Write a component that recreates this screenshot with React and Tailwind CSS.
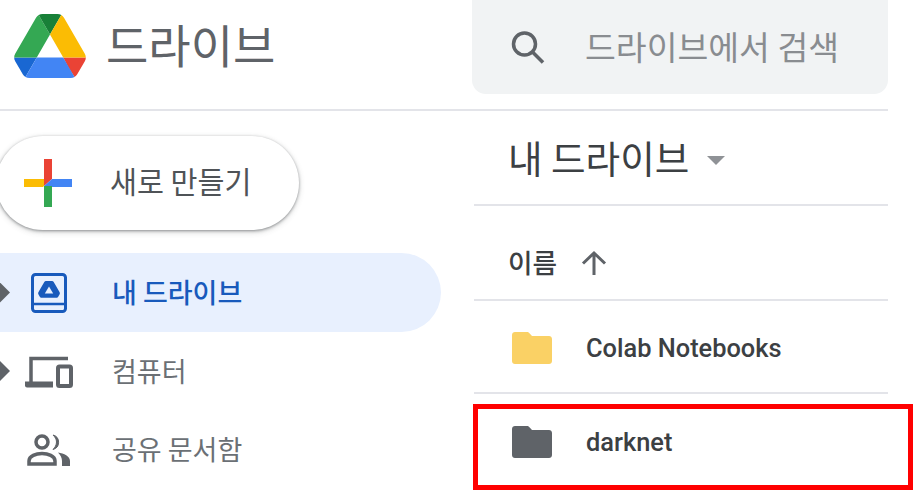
import React from "react";

// Google Drive logo.
function DriveLogo() {
    return (
        <svg viewBox="0 0 87.3 78" className="w-[72px] h-[64px] shrink-0">
            <path d="m6.6 66.85 3.85 6.65c.8 1.4 1.95 2.5 3.3 3.3l13.75-23.8h-27.5c0 1.55.4 3.1 1.2 4.5z" fill="#1967d2" />
            <path d="m43.65 25-13.75-23.8c-1.35.8-2.5 1.9-3.3 3.3l-25.4 44a9.06 9.06 0 0 0 -1.2 4.5h27.5z" fill="#34a853" />
            <path d="m73.55 76.8c1.35-.8 2.5-1.9 3.3-3.3l1.6-2.75 7.65-13.25c.8-1.4 1.2-2.95 1.2-4.5h-27.502l5.852 11.5z" fill="#ea4335" />
            <path d="m43.65 25 13.75-23.8c-1.35-.8-2.9-1.2-4.5-1.2h-18.5c-1.6 0-3.15.45-4.5 1.2z" fill="#188038" />
            <path d="m59.8 53h-32.3l-13.75 23.8c1.35.8 2.9 1.2 4.5 1.2h50.8c1.6 0 3.15-.45 4.5-1.2z" fill="#4285f4" />
            <path d="m73.4 26.5-12.7-22c-.8-1.4-1.95-2.5-3.3-3.3l-13.75 23.8 16.15 28h27.45c0-1.55-.4-3.1-1.2-4.5z" fill="#fbbc04" />
        </svg>
    );
}

// Four colour plus of the new button.
function ColorPlus() {
    return (
        <svg viewBox="0 0 48 48" className="w-[48px] h-[48px] shrink-0">
            <path d="M20 0h8v20l-8 7z" fill="#ea4335" />
            <path d="M48 20v8H28l-8-1 8-7z" fill="#4285f4" />
            <path d="M20 48V27h8v21z" fill="#34a853" />
            <path d="M0 20h20v7l-1 1H0z" fill="#fbbc04" />
        </svg>
    );
}

function MyDriveIcon() {
    return (
        <svg viewBox="0 0 36 40" className="w-[36px] h-[40px] ml-[7px]">
            <rect x="1.5" y="1.5" width="33" height="37" rx="3" fill="none" stroke="#185abc" strokeWidth="3" />
            <path d="M2 31h32" stroke="#185abc" strokeWidth="2.5" />
            <path d="M15 8h6c.8 0 1.300.3 1.700 1l5.800 10c.5.9.5 1.500 0 2.400l-1.300 2.300c-.4.8-1 1.100-1.900 1.100H10.700c-.9 0-1.500-.3-1.900-1.100l-1.300-2.300c-.5-.9-.5-1.500 0-2.400L13.300 9c.4-.7.9-1 1.700-1z" fill="#185abc" />
            <path d="M18 13.500l-4.200 7h8.400z" fill="#e8f0fe" />
        </svg>
    );
}

function ComputerIcon() {
    return (
        <svg viewBox="0 0 48 32" className="w-[48px] h-[32px] ml-[1px] mt-[2px]">
            <path d="M6 30V2.500h37" fill="none" stroke="#5f6368" strokeWidth="3.500" />
            <path d="M0 25.500h28V31.500H2q-2 0-2-2z" fill="#5f6368" />
            <rect x="33" y="10.500" width="13" height="19.500" rx="1.500" fill="none" stroke="#5f6368" strokeWidth="4" />
        </svg>
    );
}

function SharedIcon() {
    return (
        <svg viewBox="0 0 44 32" className="w-[44px] h-[32px] ml-[3px] mt-[2px]" fill="none">
            <circle cx="15" cy="8" r="6" stroke="#5f6368" strokeWidth="3.500" />
            <path d="M2 30v-3c0-5 7-7.500 13-7.500s13 2.500 13 7.500v3z" stroke="#5f6368" strokeWidth="3.500" />
            <path d="M26 1a7.500 7.500 0 0 1 0 14.500c2-2 3.500-4.500 3.500-7.500S28 3 26 1z" fill="#5f6368" stroke="#5f6368" strokeWidth="1" />
            <path d="M31 18.500c6 1 12 3.500 12 8.500v5h-8v-5c0-3-1.500-6-4-8.500z" fill="#5f6368" />
        </svg>
    );
}

function SearchIcon() {
    return (
        <svg viewBox="0 0 36 36" className="w-[36px] h-[36px] shrink-0" fill="none">
            <circle cx="15.500" cy="15" r="11" stroke="#5f6368" strokeWidth="3.500" />
            <path d="M23.500 23l10.500 10.500" stroke="#5f6368" strokeWidth="3.500" />
        </svg>
    );
}

function FolderIcon({ color }) {
    return (
        <svg viewBox="0 0 40 32" className="w-[40px] h-[32px] shrink-0">
            <path d="M3 0h12c1 0 1.500.3 2.200 1L20 4h17c1.700 0 3 1.300 3 3v22c0 1.700-1.300 3-3 3H3c-1.700 0-3-1.300-3-3V3c0-1.700 1.300-3 3-3z" fill={color} />
        </svg>
    );
}

// Rows of the left menu.
function NavRow({ active, arrow, icon, label }) {
    return (
        <div className={`flex items-center w-[441px] rounded-r-[40px] ${active ? "h-[79px] bg-[#e8f0fe]" : "h-[78px]"}`}>
            <div className="w-[24px] shrink-0 flex items-center">
                {arrow && <div className="w-[20px] h-[20px] -ml-[10px] bg-[#5f6368] [clip-path:polygon(50%_0,100%_50%,50%_100%,0_50%)]"></div>}
            </div>
            <div className="w-[88px] shrink-0 flex items-center">{icon}</div>
            <span className={`text-[27px] ${active ? "text-[#185abc] font-medium" : "text-[#6b7075]"}`}>{label}</span>
        </div>
    );
}

function FileRow({ color, name }) {
    return (
        <div className="flex items-center h-[93px] pt-[3px] border-b-2 border-[#e3e4e9] pl-[38px] gap-[34px] last:border-b-0">
            <FolderIcon color={color} />
            <span className="font-['Roboto',sans-serif] font-medium text-[25.4px] text-[#3c4043]">{name}</span>
        </div>
    );
}

export default function App() {
    return (
        <div className="relative w-[913px] h-[490px] overflow-hidden bg-white font-['Noto_Sans_CJK_KR',sans-serif]">
            <div className="w-[888px]">
                {/* Top bar */}
                <div className="flex h-[111px] border-b-2 border-[#e3e4e9]">
                    <div className="w-[472px] shrink-0 flex items-start pt-[14px] pl-[14px] gap-[20px]">
                        <DriveLogo />
                        <span className="text-[46px] leading-[58px] text-[#5f6368]">드라이브</span>
                    </div>
                    <div className="flex-1 h-[94px] bg-[#f1f3f4] rounded-b-[14px] flex items-center pl-[37px] gap-[40px]">
                        <SearchIcon />
                        <span className="text-[33.5px] -mt-[2px] text-[#898c90]">드라이브에서 검색</span>
                    </div>
                </div>

                <div className="flex">
                    {/* Sidebar */}
                    <div className="w-[474px] shrink-0">
                        <div className="flex items-center -ml-[4px] mt-[25px] w-[303px] h-[94px] bg-white rounded-full shadow-[0_1px_3px_rgba(60,64,67,0.5),0_2px_6px_rgba(60,64,67,0.2)] pl-[28px] gap-[38px]">
                            <ColorPlus />
                            <span className="text-[29.3px] -mt-[4px] text-[#4f5357]">새로 만들기</span>
                        </div>
                        <div className="mt-[23px]">
                            <NavRow active arrow icon={<MyDriveIcon />} label="내 드라이브" />
                            <NavRow arrow icon={<ComputerIcon />} label="컴퓨터" />
                            <NavRow icon={<SharedIcon />} label="공유 문서함" />
                        </div>
                    </div>

                    {/* File list */}
                    <div className="flex-1">
                        <div className="flex items-center h-[95px] border-b-2 border-[#e3e4e9] pl-[34px] gap-[18px]">
                            <span className="text-[37.6px] text-[#3c4043]">내 드라이브</span>
                            <div className="w-0 h-0 mt-[6px] border-x-[9px] border-x-transparent border-t-[9px] border-t-[#8f9296]"></div>
                        </div>
                        <div className="flex items-center h-[95px] pt-[20px] border-b-2 border-[#e3e4e9] pl-[34px] gap-[24px]">
                            <span className="text-[26.7px] font-medium text-[#3c4043]">이름</span>
                            <svg viewBox="0 0 26 26" className="w-[26px] h-[26px]" fill="none">
                                <path d="M13 25V3M2 13.500L13 3l11 10.500" stroke="#5f6368" strokeWidth="3" />
                            </svg>
                        </div>
                        <FileRow color="#fad165" name="Colab Notebooks" />
                        <FileRow color="#5f6368" name="darknet" />
                    </div>
                </div>
            </div>

            {/* Red highlight over the darknet row */}
            <div className="absolute left-[473px] top-[404px] w-[440px] h-[86px] border-[5px] border-[#ff0000]"></div>
        </div>
    );
}
